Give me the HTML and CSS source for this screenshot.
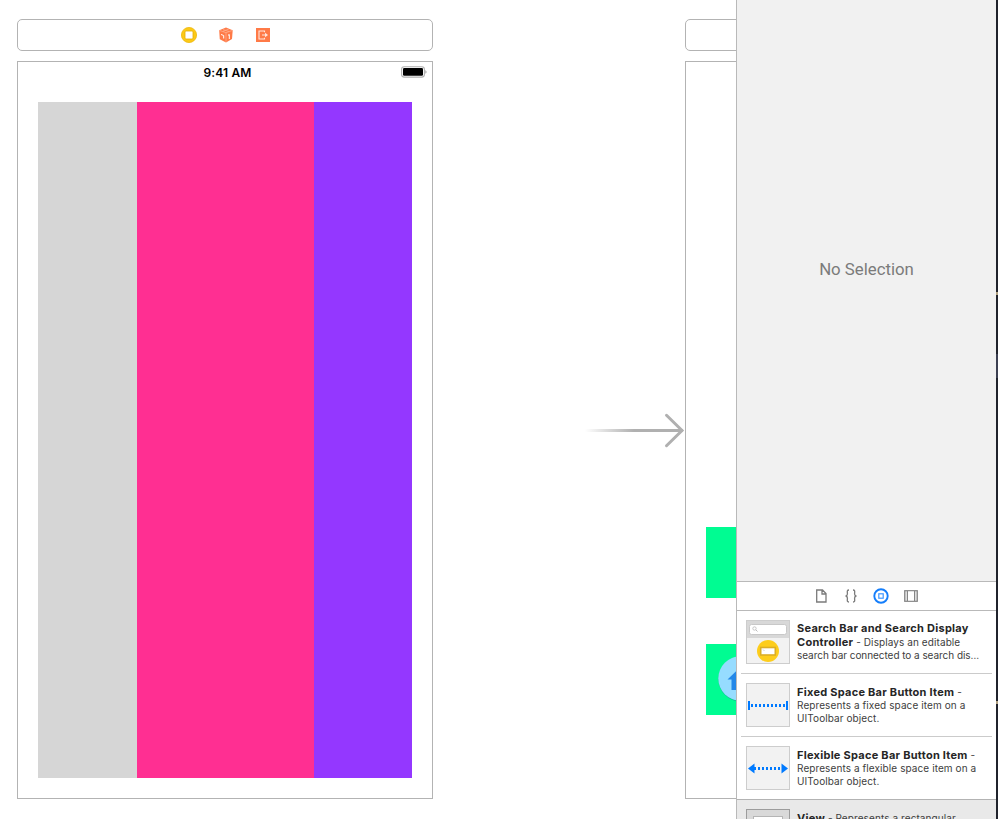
FILE: index.html
```html
<!DOCTYPE html>
<html lang="en">
<head>
<meta charset="utf-8">
<title>Storyboard</title>
<link rel="stylesheet" href="styles.css">
</head>
<body>
<div class="window">
  <main class="canvas">
    <section class="scene">
      <header class="scene-dock">
        <svg width="16" height="16" viewBox="0 0 16 16"><circle cx="8" cy="8" r="7.6" fill="#fcc917" stroke="#edb90c" stroke-width=".8"/><rect x="4" y="4" width="8" height="8" rx="1" fill="#fff" stroke="#e5ad00" stroke-width=".8"/></svg>
        <svg width="16" height="16" viewBox="0 0 16 16"><path d="M8 .6 14.7 3.2 14 12 8 15.4 1.8 12.3 1.2 3.2Z" fill="#ff7a47"/><path d="M1.5 3.4 8 5.7 14.5 3.4M8 5.7V15M5 2.6 11 4.5M10.8 2 5 4.4" fill="none" stroke="#ffb294" stroke-width=".7"/><path d="M10 8.3 11.3 7.5V12M3 7.5 5.7 8.500v3" fill="none" stroke="#fff" stroke-width="1"/></svg>
        <svg class="exit" width="14" height="14" viewBox="0 0 14 14"><path d="M0 0H14V14H0Z" fill="#ff7a47"/><path d="M8.5 4.2V3H3V11H8.5V9.8M6 7H10" fill="none" stroke="#ffe6dc" stroke-width="1.1"/><path d="M9 4.7 12 7 9 9.3Z" fill="#ffe6dc"/></svg>
      </header>
      <div class="device">
        <div class="status">
          <span class="clock">9:41 AM</span>
          <svg class="battery" width="26" height="12" viewBox="0 0 26 12"><rect x=".6" y=".7" width="22.8" height="10.4" rx="2.6" fill="#fff" stroke="#b0b0b0" stroke-width="1.1"/><rect x="2" y="2.1" width="20" height="7.7" rx="1.2"/><path d="M24.4 4.1Q26.6 5.9 24.4 7.7Z" fill="#999"/></svg>
        </div>
        <div class="columns">
          <div class="col gray"></div>
          <div class="col pink"></div>
          <div class="col purple"></div>
        </div>
      </div>
    </section>
    <svg class="entry" width="100" height="36" viewBox="0 0 100 36">
      <defs><linearGradient id="fade" x1="0" x2="1" y1="0" y2="0"><stop offset="0" stop-color="#b0b0b0" stop-opacity="0"/><stop offset=".5" stop-color="#b0b0b0"/></linearGradient></defs>
      <rect x="0" y="17" width="98" height="3" fill="url(#fade)"/>
      <path d="M81.5 3.3 97 18.5 81.5 33.7" fill="none" stroke="#b0b0b0" stroke-width="3" stroke-linecap="round"/>
    </svg>
    <section class="scene clipped">
      <header class="scene-dock"></header>
      <div class="device">
        <div class="tile"></div>
        <div class="tile">
          <svg width="46" height="48" viewBox="0 0 46 48"><circle cx="23.500" cy="24.500" r="22" fill="#168c8a" opacity=".6"/><circle cx="23.500" cy="23.500" r="22.200" fill="#96dcff"/><path d="M24 11.500 10.500 24.500H14.500V35H33.500V24.500H37.500Z" fill="#2388e8"/></svg>
        </div>
      </div>
    </section>
  </main>
  <aside class="panel">
    <div class="inspector">No Selection</div>
    <nav class="tabs">
      <svg class="file" width="12" height="14" viewBox="0 0 12 14"><path d="M.700 1H6.500L10 4.500V13H.700ZM6 1V5H10" fill="none" stroke="#7b7b7b" stroke-width="1.300"/></svg>
      <svg width="14" height="14" viewBox="0 0 14 14"><path d="M5 1C2.500 1 3.500 3 3.400 5Q3.400 6.700 1.600 7 3.400 7.300 3.400 9C3.500 11 2.500 13 5 13M9 1C11.500 1 10.500 3 10.600 5Q10.600 6.700 12.400 7 10.600 7.300 10.600 9C10.500 11 11.500 13 9 13" fill="none" stroke="#7b7b7b" stroke-width="1.300"/></svg>
      <svg width="16" height="16" viewBox="0 0 16 16"><circle cx="8" cy="8" r="6.700" fill="none" stroke="#147efb" stroke-width="1.900"/><rect x="5.800" y="5.800" width="4.400" height="4.400" fill="none" stroke="#3d96ff" stroke-width="1.200"/></svg>
      <svg width="14" height="12" viewBox="0 0 14 12"><rect x=".7" y=".7" width="12.600" height="10.600" fill="#ddd" stroke="#858585" stroke-width="1.200"/><path d="M4 1.500H10V10.500H4Z" fill="#fff"/><path d="M3.500 1V11M10.500 1V11" stroke="#858585"/></svg>
    </nav>
    <div class="library">
      <article class="item">
        <svg class="thumb" width="44" height="44" viewBox="0 0 44 44"><rect x=".5" y=".5" width="43" height="43" fill="#f2f2f2" stroke="#cdcdcd"/><path d="M1 1H43V18H1Z" fill="#d8d8d8"/><rect x="3.500" y="4.500" width="37" height="10" rx="2" fill="#fff" stroke="#c8c8c8"/><circle cx="8.500" cy="8.500" r="1.700" fill="none" stroke="#bbb" stroke-width=".8"/><path d="M9.800 9.800 11.500 11.500" stroke="#bbb"/><circle cx="22" cy="31" r="11" fill="#fdcd1c"/><rect x="14.700" y="27.500" width="14.600" height="7.500" fill="#fff" stroke="#dcae25" stroke-width="1.600"/><path d="M17 29.500l1.500 1.500" stroke="#bbb" stroke-width=".7"/></svg>
        <div class="copy first">
          <p class="ln tall"><b>Search Bar and Search Display</b></p>
          <p class="ln tall"><b>Controller</b> - Displays an editable</p>
          <p class="ln tight">search bar connected to a search dis…</p>
        </div>
      </article>
      <article class="item">
        <svg class="thumb" width="44" height="44" viewBox="0 0 44 44"><rect x=".5" y=".5" width="43" height="43" fill="#f2f2f2" stroke="#cdcdcd"/><path d="M2 18h2v9H2zM40 18h2v9h-2z" fill="#007aff"/><path d="M5 22.500H40" stroke="#007aff" stroke-width="3" stroke-dasharray="2 2"/></svg>
        <div class="copy">
          <p class="ln tall"><b>Fixed Space Bar Button Item</b> -</p>
          <p class="ln">Represents a fixed space item on a</p>
          <p class="ln">UIToolbar object.</p>
        </div>
      </article>
      <article class="item">
        <svg class="thumb" width="44" height="44" viewBox="0 0 44 44"><rect x=".5" y=".5" width="43" height="43" fill="#f2f2f2" stroke="#cdcdcd"/><path d="M2 22.500 8.500 17.500V27.500ZM42 22.500 35.500 17.500V27.500Z" fill="#007aff"/><path d="M8 22.500H36" stroke="#007aff" stroke-width="3" stroke-dasharray="2 2"/></svg>
        <div class="copy">
          <p class="ln tall"><b>Flexible Space Bar Button Item</b> -</p>
          <p class="ln">Represents a flexible space item on a</p>
          <p class="ln">UIToolbar object.</p>
        </div>
      </article>
      <article class="item selected">
        <svg class="thumb" width="44" height="44" viewBox="0 0 44 44"><rect x=".5" y=".5" width="43" height="43" fill="#d9d9d9" stroke="#9c9c9c"/><rect x="7.500" y="7.500" width="29" height="29" fill="#fff" stroke="#b5b5b5"/></svg>
        <div class="copy">
          <p class="ln tall"><b>View</b> - Represents a rectangular</p>
        </div>
      </article>
    </div>
  </aside>
  <div class="edge"><i class="mark"></i><i class="band"></i><i class="mark low"></i></div>
</div>
</body>
</html>
```
FILE: styles.css
```css
* { box-sizing: border-box; }
body { margin: 0; background: #fff; font-family: Inter, "Liberation Sans", sans-serif; }
svg { display: block; flex: none; }
.window { display: flex; width: 998px; height: 819px; overflow: hidden; }
.canvas { display: flex; width: 736px; height: 819px; padding: 19px 0 0 17px; overflow: hidden; }
.scene { display: flex; flex-direction: column; gap: 10px; width: 416px; flex: none; }
.scene-dock { display: flex; align-items: center; justify-content: center; gap: 21px; height: 32px; border: 1px solid #b3b3b3; border-radius: 5px; padding-left: 1px; }
.exit { margin-left: 1px; }
.device { height: 738px; border: 1px solid #b3b3b3; padding: 0 20px; }
.status { display: grid; grid-template-columns: 1fr auto 1fr; align-items: center; height: 20px; margin-right: -15px; margin-left: -10px; }
.clock { grid-column: 2; padding-top: 1px; font-size: 12px; font-weight: 600; line-height: 20px; letter-spacing: .14px; color: #000; }
.battery { align-self: start; justify-self: end; margin-top: 4px; }
.columns { display: grid; grid-template-columns: 99px 177px 98px; height: 676px; margin-top: 20px; }
.gray { background: #d6d6d6; }
.pink { background: #ff2f92; }
.purple { background: #9437ff; }
.entry { margin: 393px 0 0 152px; }
.clipped .device { display: flex; flex-direction: column; gap: 46px; padding-top: 465px; }
.tile { display: flex; align-items: center; height: 71px; padding: 0 0 2px 11px; background: #00fc92; }
.panel { display: flex; flex-direction: column; width: 260px; height: 819px; border-left: 1px solid #b9b9b9; overflow: hidden; flex: none; }
.inspector { height: 581px; padding-top: 259px; background: #f1f1f1; color: #7b7b7b; font: 16.8px/21px Roboto, sans-serif; text-align: center; flex: none; }
.tabs { display: flex; align-items: center; gap: 15px; height: 30px; padding-left: 79px; border-top: 1px solid #b9b9b9; border-bottom: 1px solid #b9b9b9; flex: none; }
.file { margin-right: 1px; }
.library { display: flex; flex-direction: column; }
.item { display: flex; gap: 7px; height: 63px; margin: 0 4px; padding: 9px 0 0 5px; border-bottom: 1px solid #cbcbcb; flex: none; }
.item:nth-child(3) { margin: 0; padding-left: 9px; border-color: #b3b3b3; }
.item.selected { margin: 0; padding-left: 9px; background: #e9e9e9; }
.copy { padding-top: 2px; color: #3d3d3d; font-size: 10px; white-space: nowrap; letter-spacing: .09px; }
.copy.first { padding-top: 1px; }
.ln { margin: 0; height: 13px; line-height: 13px; }
.tall { height: 14px; line-height: 14px; }
.tight { letter-spacing: -.05px; }
.ln b { font-size: 11px; font-weight: 700; color: #262626; letter-spacing: .26px; }
.edge { position: relative; width: 2px; background: #20232c; flex: none; }
.mark { position: absolute; left: 0; top: 292px; width: 2px; height: 3px; background: #b0a080; }
.mark.low { top: 701px; }
.band { position: absolute; left: 0; top: 354px; width: 2px; height: 24px; background: #3c4052; }
```
